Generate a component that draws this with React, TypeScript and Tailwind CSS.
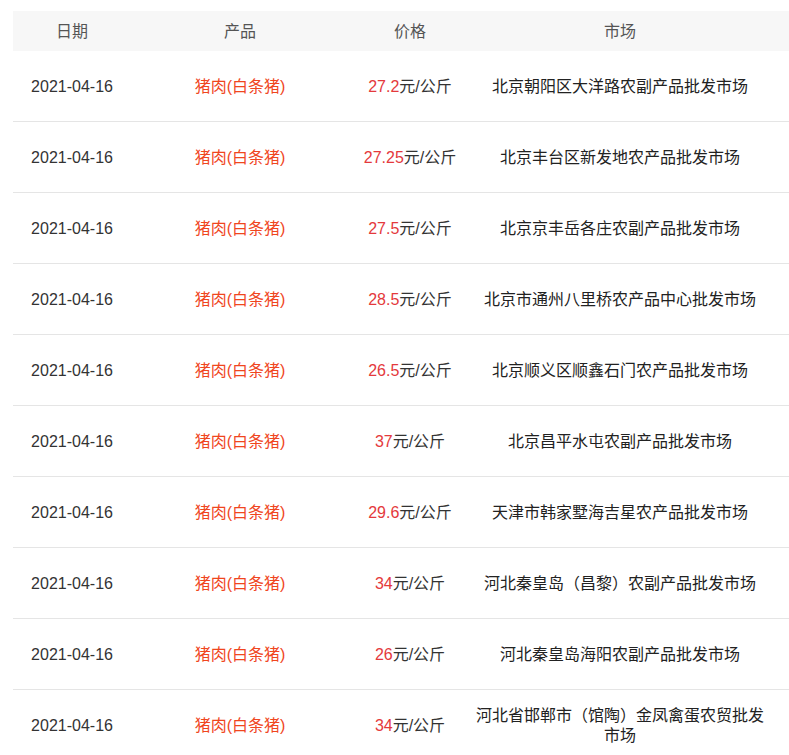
import React from 'react';

interface PriceRow {
  date: string;
  product: string;
  price: string;
  market: string;
}

const rows: PriceRow[] = [
  { date: '2021-04-16', product: '猪肉(白条猪)', price: '27.2', market: '北京朝阳区大洋路农副产品批发市场' },
  { date: '2021-04-16', product: '猪肉(白条猪)', price: '27.25', market: '北京丰台区新发地农产品批发市场' },
  { date: '2021-04-16', product: '猪肉(白条猪)', price: '27.5', market: '北京京丰岳各庄农副产品批发市场' },
  { date: '2021-04-16', product: '猪肉(白条猪)', price: '28.5', market: '北京市通州八里桥农产品中心批发市场' },
  { date: '2021-04-16', product: '猪肉(白条猪)', price: '26.5', market: '北京顺义区顺鑫石门农产品批发市场' },
  { date: '2021-04-16', product: '猪肉(白条猪)', price: '37', market: '北京昌平水屯农副产品批发市场' },
  { date: '2021-04-16', product: '猪肉(白条猪)', price: '29.6', market: '天津市韩家墅海吉星农产品批发市场' },
  { date: '2021-04-16', product: '猪肉(白条猪)', price: '34', market: '河北秦皇岛（昌黎）农副产品批发市场' },
  { date: '2021-04-16', product: '猪肉(白条猪)', price: '26', market: '河北秦皇岛海阳农副产品批发市场' },
  { date: '2021-04-16', product: '猪肉(白条猪)', price: '34', market: '河北省邯郸市（馆陶）金凤禽蛋农贸批发市场' },
];

const cols = 'grid grid-cols-[118px_218px_122px_298px_1fr]';

export default function App() {
  return (
    <div
      className="min-h-screen bg-white pt-[11px] pl-[13px] text-[16px] text-[#333]"
      style={{ fontFamily: '"Liberation Sans", "Noto Sans CJK SC", sans-serif' }}
    >
      <div className="w-[776px]">
        {/* header */}
        <div className={`${cols} h-[40px] items-center bg-[#f7f7f7] pt-[2px] text-[#555]`}>
          <div className="text-center">日期</div>
          <div className="text-center">产品</div>
          <div className="text-center">价格</div>
          <div className="text-center">市场</div>
          <div />
        </div>

        {rows.map((row, i) => (
          <div
            key={i}
            className={`${cols} min-h-[71px] items-center border-b border-[#e5e5e5] pt-[2px] leading-[20px]`}
          >
            <div className="text-center">{row.date}</div>
            <div className="text-center text-[#f0461e]">{row.product}</div>
            <div className="text-center">
              <span className="text-[#e4393c]">{row.price}</span>元/公斤
            </div>
            <div className="px-[4px] py-[10px] text-center text-[#222]">{row.market}</div>
            <div />
          </div>
        ))}
      </div>
    </div>
  );
}
